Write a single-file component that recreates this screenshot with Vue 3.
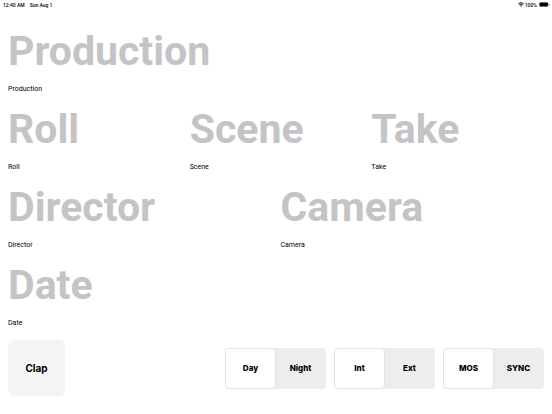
<script setup>
import { ref } from 'vue'

const rows = [
  ['Production'],
  ['Roll', 'Scene', 'Take'],
  ['Director', 'Camera'],
  ['Date'],
]
const toggles = ref([
  { name: 'time', options: ['Day', 'Night'], value: 'Day' },
  { name: 'place', options: ['Int', 'Ext'], value: 'Int' },
  { name: 'sound', options: ['MOS', 'SYNC'], value: 'MOS' },
])
</script>

<template>
  <div class="screen">
    <header class="status">
      <span>12:40 AM</span>
      <span class="day">Sun Aug 1</span>
      <svg class="wifi" viewBox="0 0 12 9" aria-hidden="true">
        <path d="M0.8 3.2a7.4 7.4 0 0 1 10.4 0M2.7 5.2a4.7 4.7 0 0 1 6.6 0" />
        <path class="dot" d="M6 8.8L4 6.8a2.8 2.8 0 0 1 4 0z" />
      </svg>
      <span>100%</span>
      <svg class="battery" viewBox="0 0 22 10" aria-hidden="true">
        <rect class="shell" x="0.5" y="0.5" width="18" height="9" rx="2.6" />
        <rect x="1.2" y="1.2" width="16.6" height="7.6" rx="1.8" />
        <path d="M20 3.4a1.7 1.7 0 0 1 0 3.2z" />
      </svg>
    </header>

    <main>
      <div v-for="row in rows" :key="row[0]" class="row">
        <div v-for="name in row" :key="name" class="field">
          <input :id="name" type="text" :placeholder="name" />
          <label :for="name">{{ name }}</label>
        </div>
      </div>
    </main>

    <footer>
      <button class="clap" type="button">Clap</button>
      <div class="toggles">
        <div v-for="t in toggles" :key="t.name" class="toggle" role="radiogroup">
          <label v-for="o in t.options" :key="o" :class="{ on: t.value === o }">
            <input v-model="t.value" type="radio" :name="t.name" :value="o" />
            {{ o }}
          </label>
        </div>
      </div>
    </footer>
  </div>
</template>

<style>
body {
  background: #fff;
}
</style>

<style scoped>
.screen {
  color: #000;
  font-family: Inter, sans-serif;
}
.status {
  display: flex;
  align-items: center;
  height: 9px;
  padding: 0 2px 0 3px;
  font: 500 5px Roboto, sans-serif;
}
.day {
  margin: 0 auto 0 5px;
}
.wifi {
  width: 6px;
  height: 5px;
  margin-right: 1px;
  fill: none;
  stroke: #000;
  stroke-width: 1.8;
}
.wifi .dot {
  fill: #000;
  stroke: none;
}
.battery {
  width: 11px;
  height: 5px;
  margin-left: 2px;
}
.shell {
  fill: none;
  stroke: #888;
}
main {
  padding: 17px 8px 0;
}
.row {
  display: flex;
  gap: 9px;
}
.field {
  flex: 1;
  min-width: 0;
  height: 78px;
}
.field input {
  display: block;
  box-sizing: border-box;
  width: 100%;
  height: 50px;
  padding: 0;
  border: 0;
  outline: 0;
  background: transparent;
  font: 700 41px/50px Roboto, sans-serif;
}
.field input::placeholder {
  color: #c4c4c6;
  opacity: 1;
}
.field label {
  display: block;
  padding-top: 8px;
  font: 400 7px/10px Roboto, sans-serif;
}
footer {
  display: flex;
  align-items: center;
  justify-content: space-between;
  padding: 2px 8px 0;
}
.clap {
  width: 57px;
  height: 56px;
  padding: 0;
  border: 0;
  border-radius: 6px;
  background: #f4f4f4;
  color: #000;
  font: 700 10px Inter, sans-serif;
}
.toggles {
  display: flex;
  gap: 8px;
}
.toggle {
  display: flex;
  gap: 1px;
  box-sizing: border-box;
  width: 101px;
  height: 41px;
  padding: 1px;
  border-radius: 4px;
  background: #ededed;
}
.toggle label {
  position: relative;
  display: flex;
  flex: 1 1 0;
  align-items: center;
  justify-content: center;
  border-radius: 3px;
  font-size: 8px;
  font-weight: 800;
}
.toggle .on {
  background: #fff;
  box-shadow: 0 0 2px rgba(0, 0, 0, 0.15);
}
.toggle input {
  position: absolute;
  inset: 0;
  margin: 0;
  opacity: 0;
}
</style>
